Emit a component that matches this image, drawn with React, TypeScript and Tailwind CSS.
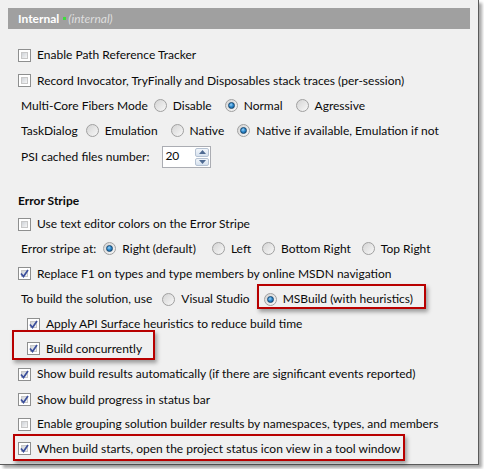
import React from "react";

type CheckProps = { checked?: boolean };

const CheckBox = ({ checked }: CheckProps) => (
  <span className="relative flex h-[13px] w-[13px] shrink-0 items-center justify-center border border-[#8e8f8f] bg-white">
    <span className="absolute inset-[2px] border border-[#c8c8c8] bg-gradient-to-br from-[#cfd3d8] to-[#f6f6f6]" />
    {checked && (
      <svg className="relative" width="9" height="9" viewBox="0 0 9 9">
        <path d="M1 4.5 L3.5 7.5 L8 1" fill="none" stroke="#3b4f9c" strokeWidth="1.7" />
      </svg>
    )}
  </span>
);

const Radio = ({ checked }: CheckProps) => (
  <span className="relative flex h-[13px] w-[13px] shrink-0 items-center justify-center rounded-full border border-[#a0a0a0] bg-gradient-to-br from-[#d4d4d4] to-[#f8f8f8]">
    {checked && (
      <span className="h-[7px] w-[7px] rounded-full border border-[#17466e] bg-[radial-gradient(circle_at_40%_35%,#9fd3f6_0%,#2d8bd0_45%,#0c4f85_100%)]" />
    )}
  </span>
);

const CheckRow = ({
  label,
  checked,
  indent,
  h = "h-[25px]",
  children,
}: {
  label: string;
  checked?: boolean;
  indent?: boolean;
  h?: string;
  children?: React.ReactNode;
}) => (
  <div className={`relative flex items-center ${h} ${indent ? "pl-[9px]" : ""}`}>
    <CheckBox checked={checked} />
    <span className="ml-[6px] whitespace-nowrap">{label}</span>
    {children}
  </div>
);

const RadioOpt = ({
  label,
  checked,
  gap = "ml-[13px]",
  children,
}: {
  label: string;
  checked?: boolean;
  gap?: string;
  children?: React.ReactNode;
}) => (
  <span className={`relative flex items-center ${gap}`}>
    <Radio checked={checked} />
    <span className="ml-[6px] whitespace-nowrap">{label}</span>
    {children}
  </span>
);

const RedBox = ({ className }: { className: string }) => (
  <div
    className={`pointer-events-none absolute border-2 border-[#b80000] shadow-[2px_3px_4px_rgba(0,0,0,0.35)] ${className}`}
  />
);

export default function App() {
  return (
    <div className="h-[469px] w-[484px] bg-white">
      <div
        className="h-[465px] w-[479px] border-b border-r border-[#5a5a5a] bg-[#f0f0f0] pt-[8px] text-[12px] text-[#0a0a0a] shadow-[3px_3px_3px_rgba(0,0,0,0.35)]"
        style={{ fontFamily: 'Lato, "Noto Sans", sans-serif' }}
      >
        <div className="mx-[8px] flex h-[21px] items-center bg-[#a0a0a0] pl-[10px] text-white">
          <span className="font-bold">Internal</span>
          <span className="ml-[4px] mr-[2px] h-[3px] w-[3px] bg-[#3ddc3d]" />
          <span className="italic text-[#dedede]">(internal)</span>
        </div>

        <div className="pl-[18px] pt-[13px]">
          <CheckRow label="Enable Path Reference Tracker" h="h-[26px]" />
          <CheckRow label="Record Invocator, TryFinally and Disposables stack traces (per-session)" />
          <div className="flex h-[25px] items-center pl-[3px]">
            <span>Multi-Core Fibers Mode</span>
            <RadioOpt label="Disable" gap="ml-[6px]" />
            <RadioOpt label="Normal" checked />
            <RadioOpt label="Agressive" />
          </div>
          <div className="flex h-[25px] items-center pl-[3px]">
            <span>TaskDialog</span>
            <RadioOpt label="Emulation" gap="ml-[8px]" />
            <RadioOpt label="Native" />
            <RadioOpt label="Native if available, Emulation if not" checked />
          </div>
          <div className="flex h-[28px] items-center pl-[3px]">
            <span>PSI cached files number:</span>
            <div className="ml-[13px] flex h-[22px] w-[49px] items-stretch border border-[#abadb3] bg-white">
              <span className="flex-1 pl-[2px] leading-[18px]">20</span>
              <div className="my-[1px] mr-[1px] flex w-[14px] flex-col gap-[1px]">
                <span className="flex flex-1 items-center justify-center rounded-[2px] border border-[#b5c2d3] bg-gradient-to-b from-[#f2f6fb] to-[#d6e1ee]">
                  <svg width="7" height="4" viewBox="0 0 7 4">
                    <path d="M0 4 L3.5 0 L7 4 Z" fill="#4e6a92" />
                  </svg>
                </span>
                <span className="flex flex-1 items-center justify-center rounded-[2px] border border-[#b5c2d3] bg-gradient-to-b from-[#f2f6fb] to-[#d6e1ee]">
                  <svg width="7" height="4" viewBox="0 0 7 4">
                    <path d="M0 0 L7 0 L3.5 4 Z" fill="#4e6a92" />
                  </svg>
                </span>
              </div>
            </div>
          </div>

          <div className="mt-[19px] flex h-[22px] items-center font-bold">Error Stripe</div>
          <CheckRow label="Use text editor colors on the Error Stripe" h="h-[24px]" />
          <div className="flex h-[25px] items-center pl-[3px]">
            <span>Error stripe at:</span>
            <RadioOpt label="Right (default)" checked gap="ml-[7px]" />
            <RadioOpt label="Left" gap="ml-[16px]" />
            <RadioOpt label="Bottom Right" gap="ml-[11px]" />
            <RadioOpt label="Top Right" gap="ml-[11px]" />
          </div>
          <CheckRow label="Replace F1 on types and type members by online MSDN navigation" checked />
          <div className="flex h-[26px] items-center pl-[3px]">
            <span>To build the solution, use</span>
            <RadioOpt label="Visual Studio" gap="ml-[10px]" />
            <RadioOpt label="MSBuild (with heuristics)" checked gap="ml-[14px]">
              <RedBox className="-left-[7px] -top-[6px] h-[25px] w-[169px]" />
            </RadioOpt>
          </div>
          <CheckRow label="Apply API Surface heuristics to reduce build time" checked indent h="h-[24px]" />
          <CheckRow label="Build concurrently" checked indent>
            <RedBox className="-left-[6px] -top-[6px] h-[30px] w-[143px]" />
          </CheckRow>
          <CheckRow
            label="Show build results automatically (if there are significant events reported)"
            checked
            h="h-[26px]"
          />
          <CheckRow label="Show build progress in status bar" checked />
          <CheckRow label="Enable grouping solution builder results by namespaces, types, and members" h="h-[24px]" />
          <CheckRow label="When build starts, open the project status icon view in a tool window" checked>
            <RedBox className="-left-[5px] -top-[2px] h-[27px] w-[392px]" />
          </CheckRow>
        </div>
      </div>
    </div>
  );
}
